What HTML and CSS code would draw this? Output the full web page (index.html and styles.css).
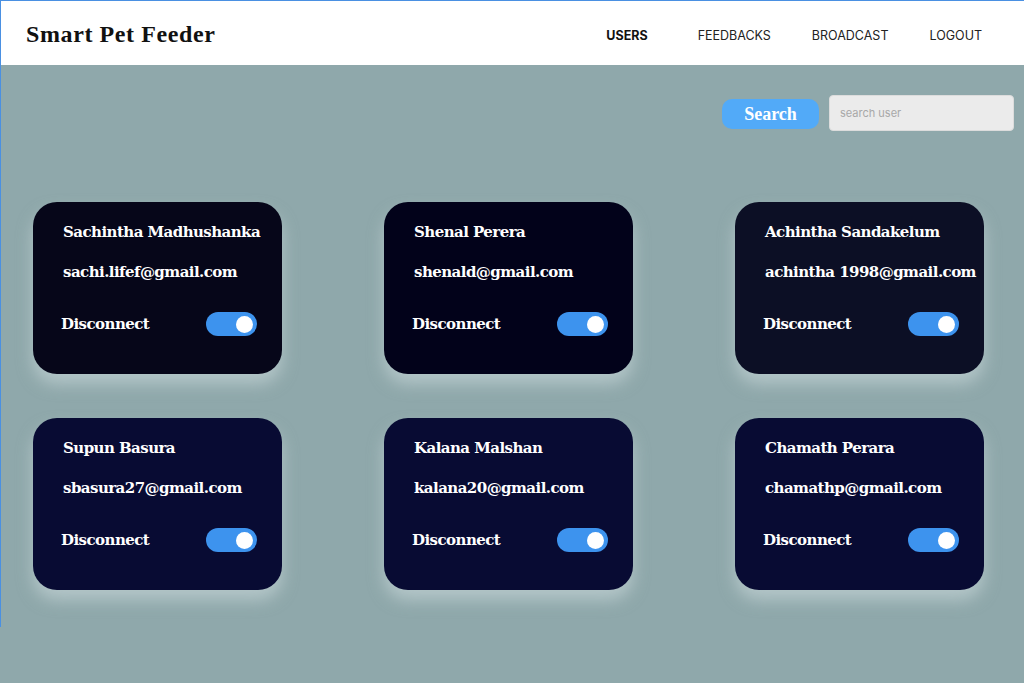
FILE: index.html
```html
<!DOCTYPE html>
<html lang="en">
<head>
<meta charset="utf-8">
<title>Smart Pet Feeder</title>
<link rel="stylesheet" href="styles.css">
</head>
<body>
<div class="page">
  <header class="topbar">
    <div class="brand">Smart Pet Feeder</div>
    <nav class="nav">
      <a class="nav-link active">USERS</a>
      <a class="nav-link">FEEDBACKS</a>
      <a class="nav-link">BROADCAST</a>
      <a class="nav-link">LOGOUT</a>
    </nav>
  </header>
  <div class="search-row">
    <button class="search-btn">Search</button>
    <input class="search-input" type="text" placeholder="search user">
  </div>
  <main class="cards">
    <div class="card c1">
      <div class="name">Sachintha Madhushanka</div>
      <div class="email">sachi.lifef@gmail.com</div>
      <div class="action"><span>Disconnect</span><span class="toggle"><span class="knob"></span></span></div>
    </div>
    <div class="card c2">
      <div class="name">Shenal Perera</div>
      <div class="email">shenald@gmail.com</div>
      <div class="action"><span>Disconnect</span><span class="toggle"><span class="knob"></span></span></div>
    </div>
    <div class="card c3">
      <div class="name">Achintha Sandakelum</div>
      <div class="email">achintha 1998@gmail.com</div>
      <div class="action"><span>Disconnect</span><span class="toggle"><span class="knob"></span></span></div>
    </div>
    <div class="card c4">
      <div class="name">Supun Basura</div>
      <div class="email">sbasura27@gmail.com</div>
      <div class="action"><span>Disconnect</span><span class="toggle"><span class="knob"></span></span></div>
    </div>
    <div class="card c4">
      <div class="name">Kalana Malshan</div>
      <div class="email">kalana20@gmail.com</div>
      <div class="action"><span>Disconnect</span><span class="toggle"><span class="knob"></span></span></div>
    </div>
    <div class="card c4">
      <div class="name">Chamath Perara</div>
      <div class="email">chamathp@gmail.com</div>
      <div class="action"><span>Disconnect</span><span class="toggle"><span class="knob"></span></span></div>
    </div>
  </main>
</div>
</body>
</html>
```
FILE: styles.css
```css
* { box-sizing: border-box; }
html, body { margin: 0; padding: 0; }
body {
  background: #8fa8ab;
  width: 1024px;
  height: 683px;
  overflow: hidden;
}
.page {
  height: 627px;
  border-top: 1px solid #4a90e2;
  border-left: 1px solid #4a90e2;
}
.topbar {
  height: 64px;
  background: #ffffff;
  display: flex;
  align-items: center;
  justify-content: space-between;
  padding: 0 42px 0 25px;
}
.brand {
  font-family: "Liberation Serif", "DejaVu Serif", serif;
  font-weight: 700;
  font-size: 24px;
  letter-spacing: 0.6px;
  color: #111;
  margin-top: 2px;
}
.nav {
  display: flex;
  gap: 41px;
  align-items: center;
  margin-top: 4px;
}
.nav-link {
  font-family: Inter, "Liberation Sans", sans-serif;
  font-size: 12.5px;
  color: #222;
}
.nav-link.active { font-weight: 700; color: #111; margin-right: 9px; }
.search-row {
  display: flex;
  justify-content: flex-end;
  align-items: center;
  gap: 10px;
  padding: 30px 10px 0 0;
  height: 66px;
}
.search-btn {
  width: 97px;
  height: 30px;
  border: none;
  border-radius: 10px;
  background: #52aaf8;
  color: #fff;
  font-family: "Liberation Serif", "DejaVu Serif", serif;
  font-weight: 700;
  font-size: 18px;
  padding: 0;
  margin-top: 2px;
}
.search-input {
  width: 185px;
  height: 36px;
  border: 1px solid #dcdcdc;
  border-radius: 4px;
  background: #ebebeb;
  font-family: Inter, "Liberation Sans", sans-serif;
  font-size: 11px;
  padding: 0 10px;
  outline: none;
}
.search-input::placeholder { color: #a8a8a8; }
.cards {
  display: grid;
  grid-template-columns: repeat(3, 249px);
  column-gap: 102px;
  row-gap: 44px;
  padding: 71px 0 0 32px;
}
.card {
  height: 172px;
  border-radius: 24px;
  color: #fff;
  font-family: "DejaVu Serif", "Liberation Serif", serif;
  font-weight: 700;
  padding: 20px 0 0 30px;
  box-shadow: 0 10px 16px rgba(215, 228, 229, 0.5);
}
.c1 { background: #060619; }
.c2 { background: #02021a; }
.c3 { background: #0c0f25; }
.c4 { background: #080b33; }
.name, .email {
  font-size: 15px;
  height: 20px;
  line-height: 20px;
  letter-spacing: -0.55px;
}
.email { margin-top: 20px; }
.action {
  display: flex;
  align-items: center;
  justify-content: space-between;
  width: 196px;
  margin-top: 30px;
  margin-left: -2px;
  font-size: 15px;
  letter-spacing: -0.55px;
}
.toggle {
  width: 51px;
  height: 24px;
  border-radius: 12px;
  background: #3d93ee;
  display: flex;
  align-items: center;
  justify-content: flex-end;
  padding-right: 4px;
}
.knob {
  width: 17px;
  height: 17px;
  border-radius: 50%;
  background: #fff;
}
```
